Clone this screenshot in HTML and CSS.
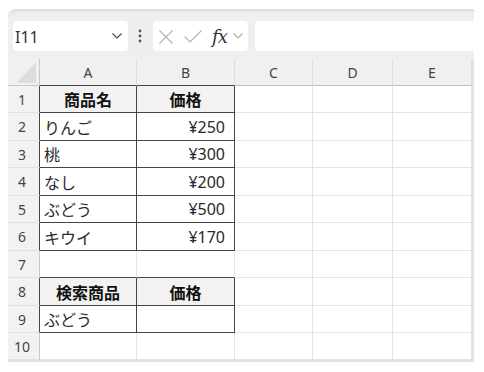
FILE: index.html
```html
<!DOCTYPE html>
<html lang="ja">
<head>
    <meta charset="UTF-8">
    <meta name="viewport" content="width=device-width, initial-scale=1.0">
    <title>Sheet</title>
    <link rel="stylesheet" href="styles.css">
</head>
<body>
    <div class="app">
        <div class="toolbar">
            <div class="namebox">
                <span class="ref">I11</span>
                <svg class="chev" width="10" height="6" viewBox="0 0 10 6"><path d="M0.5 0.5 L5 5 L9.5 0.5" fill="none" stroke="#444" stroke-width="1.1"/></svg>
            </div>
            <div class="kebab">
                <svg width="4" height="14" viewBox="0 0 4 14"><circle cx="2" cy="2" r="1.4" fill="#555"/><circle cx="2" cy="7" r="1.4" fill="#555"/><circle cx="2" cy="12" r="1.4" fill="#555"/></svg>
            </div>
            <div class="fbox">
                <svg class="ico-x" width="14" height="14" viewBox="0 0 14 14"><path d="M0.5 0.5 L13.5 13.5 M13.5 0.5 L0.5 13.5" stroke="#b4b4b4" stroke-width="1.2" fill="none"/></svg>
                <svg class="ico-ok" width="18" height="13" viewBox="0 0 18 13"><path d="M0.5 6.5 L6 12 L17.5 0.5" stroke="#b4b4b4" stroke-width="1.2" fill="none"/></svg>
                <span class="fx">fx</span>
                <svg class="chev2" width="10" height="6" viewBox="0 0 10 6"><path d="M0.5 0.5 L5 5 L9.5 0.5" fill="none" stroke="#aaa" stroke-width="1.1"/></svg>
            </div>
            <div class="finput"></div>
        </div>

        <div class="sheet">
            <div class="c corner"><svg width="32" height="27" viewBox="0 0 32 27"><polygon points="29,3 29,24 9,24" fill="#dcdcdc"/></svg></div>
            <div class="c ch edge">A</div>
            <div class="c ch edge">B</div>
            <div class="c ch">C</div>
            <div class="c ch">D</div>
            <div class="c ch">E</div>

            <div class="c rh edge">1</div>
            <div class="c t th">商品名</div>
            <div class="c t th">価格</div>
            <div class="c"></div><div class="c"></div><div class="c"></div>

            <div class="c rh edge">2</div>
            <div class="c t">りんご</div>
            <div class="c t num">¥250</div>
            <div class="c"></div><div class="c"></div><div class="c"></div>

            <div class="c rh edge">3</div>
            <div class="c t">桃</div>
            <div class="c t num">¥300</div>
            <div class="c"></div><div class="c"></div><div class="c"></div>

            <div class="c rh edge">4</div>
            <div class="c t">なし</div>
            <div class="c t num">¥200</div>
            <div class="c"></div><div class="c"></div><div class="c"></div>

            <div class="c rh edge">5</div>
            <div class="c t">ぶどう</div>
            <div class="c t num">¥500</div>
            <div class="c"></div><div class="c"></div><div class="c"></div>

            <div class="c rh edge">6</div>
            <div class="c t">キウイ</div>
            <div class="c t num">¥170</div>
            <div class="c"></div><div class="c"></div><div class="c"></div>

            <div class="c rh">7</div>
            <div class="c above"></div>
            <div class="c above"></div>
            <div class="c"></div><div class="c"></div><div class="c"></div>

            <div class="c rh edge">8</div>
            <div class="c t th">検索商品</div>
            <div class="c t th">価格</div>
            <div class="c"></div><div class="c"></div><div class="c"></div>

            <div class="c rh edge">9</div>
            <div class="c t">ぶどう</div>
            <div class="c t num"></div>
            <div class="c"></div><div class="c"></div><div class="c"></div>

            <div class="c rh">10</div>
            <div class="c"></div><div class="c"></div>
            <div class="c"></div><div class="c"></div><div class="c"></div>
        </div>
    </div>
</body>
</html>
```

FILE: styles.css
```css
body {
    margin: 0;
    background: #fff;
    font-family: "Noto Sans", "Noto Sans CJK JP", sans-serif;
    color: #2a2a2a;
}
.app {
    width: 466px;
    margin: 9px 0 0 8px;
}
.toolbar {
    height: 50px;
    box-sizing: border-box;
    padding: 12px 0 0 5px;
    display: flex;
    align-items: flex-start;
    background: #efefef;
    border-top: 1px solid #dadada;
    border-top-left-radius: 8px;
    box-shadow: inset 0 4px 3px -2px rgba(0, 0, 0, 0.06);
}
.namebox {
    width: 115px;
    height: 30px;
    box-sizing: border-box;
    margin-top: -1px;
    padding: 0 6px 0 2px;
    background: #fff;
    border-radius: 4px;
    display: flex;
    align-items: center;
    justify-content: space-between;
}
.ref {
    font-size: 16px;
    color: #333;
    padding-top: 2px;
}
.kebab {
    width: 25px;
    height: 30px;
    margin-top: -1px;
    display: flex;
    align-items: center;
    justify-content: center;
    padding-right: 1px;
    box-sizing: border-box;
}
.fbox {
    width: 95px;
    height: 30px;
    margin-top: -1px;
    box-sizing: border-box;
    padding-left: 6px;
    background: #fff;
    border-radius: 4px;
    display: flex;
    align-items: center;
}
.ico-x {
    margin-top: 1px;
}
.ico-ok {
    margin-left: 11px;
    margin-top: 1px;
}
.fx {
    margin-left: 10px;
    font-family: "DejaVu Serif", "Liberation Serif", serif;
    font-style: italic;
    font-size: 18px;
    color: #333;
    letter-spacing: -1px;
}
.chev2 {
    margin-left: 6px;
}
.finput {
    flex: 1;
    height: 30px;
    margin: -1px 0 0 7px;
    background: #fff;
    border-radius: 4px 0 0 4px;
}
.sheet {
    display: grid;
    grid-template-columns: 32px 97px 98px 78px 80px 79px;
    grid-template-rows: 27px 27px 28px 27px 28px 27px 28px 27px 28px 27px 27px;
    border-right: 2px solid #e2e2e2;
    border-bottom: 2px solid #e2e2e2;
}
.c {
    box-sizing: border-box;
    border-right: 1px solid #e4e4e4;
    border-bottom: 1px solid #e4e4e4;
    display: flex;
    align-items: center;
    padding: 0 4px;
    font-size: 16px;
    white-space: nowrap;
    overflow: hidden;
}
.corner {
    padding: 0;
    background: #f0f0f0;
    border-right-color: #c8c8c8;
    border-bottom-color: #c8c8c8;
}
.ch {
    justify-content: center;
    background: #f0f0f0;
    font-size: 14px;
    color: #444;
    border-right-color: #dcdcdc;
    border-bottom-color: #bdbdbd;
}
.rh {
    justify-content: center;
    padding: 0 3px 0 0;
    background: #f2f2f2;
    font-size: 14px;
    color: #444;
    border-right-color: #c8c8c8;
    border-bottom-color: #e0e0e0;
}
.ch.edge,
.above {
    border-bottom-color: #444;
}
.rh.edge,
.t {
    border-right-color: #444;
}
.t {
    border-bottom-color: #444;
}
.th {
    justify-content: center;
    background: #f2f2f2;
    font-weight: bold;
    color: #111;
}
.num {
    justify-content: flex-end;
    padding-right: 9px;
}
```
